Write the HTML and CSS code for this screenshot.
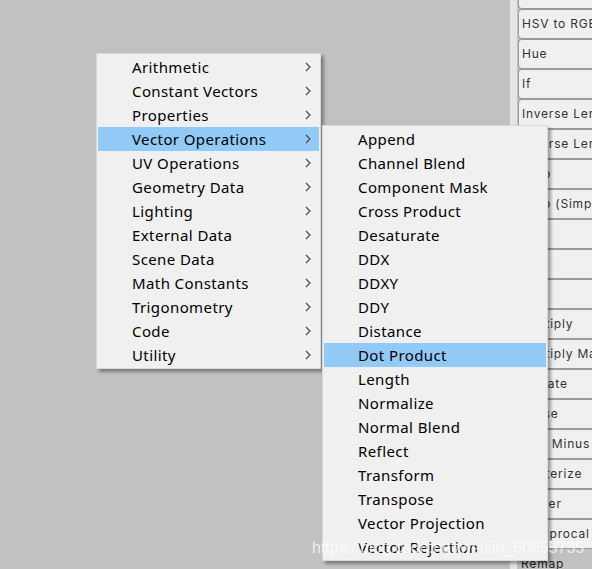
FILE: index.html
```html
<!DOCTYPE html>
<html>
<head>
<meta charset="utf-8">
<link rel="stylesheet" href="styles.css">
</head>
<body>
<div class="stage">
  <div class="canvas">
    <div class="menu main-menu">
      <div class="item"><span class="label">Arithmetic</span><svg class="chev" viewBox="0 0 6 10"><polyline points="1,1 5,5 1,9"/></svg></div>
      <div class="item"><span class="label">Constant Vectors</span><svg class="chev" viewBox="0 0 6 10"><polyline points="1,1 5,5 1,9"/></svg></div>
      <div class="item"><span class="label">Properties</span><svg class="chev" viewBox="0 0 6 10"><polyline points="1,1 5,5 1,9"/></svg></div>
      <div class="item active"><span class="label">Vector Operations</span><svg class="chev" viewBox="0 0 6 10"><polyline points="1,1 5,5 1,9"/></svg></div>
      <div class="item"><span class="label">UV Operations</span><svg class="chev" viewBox="0 0 6 10"><polyline points="1,1 5,5 1,9"/></svg></div>
      <div class="item"><span class="label">Geometry Data</span><svg class="chev" viewBox="0 0 6 10"><polyline points="1,1 5,5 1,9"/></svg></div>
      <div class="item"><span class="label">Lighting</span><svg class="chev" viewBox="0 0 6 10"><polyline points="1,1 5,5 1,9"/></svg></div>
      <div class="item"><span class="label">External Data</span><svg class="chev" viewBox="0 0 6 10"><polyline points="1,1 5,5 1,9"/></svg></div>
      <div class="item"><span class="label">Scene Data</span><svg class="chev" viewBox="0 0 6 10"><polyline points="1,1 5,5 1,9"/></svg></div>
      <div class="item"><span class="label">Math Constants</span><svg class="chev" viewBox="0 0 6 10"><polyline points="1,1 5,5 1,9"/></svg></div>
      <div class="item"><span class="label">Trigonometry</span><svg class="chev" viewBox="0 0 6 10"><polyline points="1,1 5,5 1,9"/></svg></div>
      <div class="item"><span class="label">Code</span><svg class="chev" viewBox="0 0 6 10"><polyline points="1,1 5,5 1,9"/></svg></div>
      <div class="item"><span class="label">Utility</span><svg class="chev" viewBox="0 0 6 10"><polyline points="1,1 5,5 1,9"/></svg></div>
    </div>
    <div class="menu sub-menu">
      <div class="item"><span class="label">Append</span></div>
      <div class="item"><span class="label">Channel Blend</span></div>
      <div class="item"><span class="label">Component Mask</span></div>
      <div class="item"><span class="label">Cross Product</span></div>
      <div class="item"><span class="label">Desaturate</span></div>
      <div class="item"><span class="label">DDX</span></div>
      <div class="item"><span class="label">DDXY</span></div>
      <div class="item"><span class="label">DDY</span></div>
      <div class="item"><span class="label">Distance</span></div>
      <div class="item active"><span class="label">Dot Product</span></div>
      <div class="item"><span class="label">Length</span></div>
      <div class="item"><span class="label">Normalize</span></div>
      <div class="item"><span class="label">Normal Blend</span></div>
      <div class="item"><span class="label">Reflect</span></div>
      <div class="item"><span class="label">Transform</span></div>
      <div class="item"><span class="label">Transpose</span></div>
      <div class="item"><span class="label">Vector Projection</span></div>
      <div class="item"><span class="label">Vector Rejection</span></div>
    </div>
    <div class="watermark">https://blog.csdn.net/weixin_60855735</div>
  </div>
  <div class="panel">
    <div class="strip"></div>
    <div class="nodes">
      <div class="node"></div>
      <div class="node">HSV to RGB</div>
      <div class="node">Hue</div>
      <div class="node">If</div>
      <div class="node">Inverse Lerp</div>
      <div class="node">Inverse Lerp</div>
      <div class="node">Lerp</div>
      <div class="node">Lerp (Simple)</div>
      <div class="node">Log</div>
      <div class="node">Max</div>
      <div class="node">Min</div>
      <div class="node">Multiply</div>
      <div class="node">Multiply Matrix</div>
      <div class="node">Negate</div>
      <div class="node">Noise</div>
      <div class="node">One Minus</div>
      <div class="node">Posterize</div>
      <div class="node">Power</div>
      <div class="node">Reciprocal</div>
      <div class="node remap">Remap</div>
    </div>
    <div class="plus">+</div>
  </div>
</div>
</body>
</html>
```

FILE: styles.css
```css
html, body {
  margin: 0;
  padding: 0;
  width: 592px;
  height: 569px;
  overflow: hidden;
  background: #c1c1c1;
}

.stage {
  display: flex;
  width: 592px;
  height: 569px;
  overflow: hidden;
}

.canvas {
  position: relative;
  width: 510px;
  flex: none;
  height: 569px;
}

.menu {
  position: absolute;
  background: #f0f0f0;
  border: 1px solid #d8d8d8;
  padding: 1px;
  box-shadow: 3px 3px 3px rgba(0, 0, 0, 0.35);
  font-family: "Noto Sans", "Open Sans", sans-serif;
  font-size: 15px;
  letter-spacing: 0.4px;
  color: #000;
  z-index: 2;
}

.main-menu {
  left: 96px;
  top: 53px;
  width: 221px;
}

.sub-menu {
  left: 322px;
  top: 125px;
  width: 222px;
  z-index: 3;
}

.item {
  height: 24px;
  display: flex;
  align-items: center;
  position: relative;
}

.main-menu .item {
  padding-left: 34px;
}

.sub-menu .item {
  padding-left: 34px;
}

.item.active {
  background: #91c9f7;
}

.label {
  flex: 1;
  line-height: 24px;
  white-space: nowrap;
}

.chev {
  width: 6px;
  height: 10px;
  margin-right: 8px;
  fill: none;
  stroke: #444;
  stroke-width: 1.1;
}

.watermark {
  position: absolute;
  left: 312px;
  top: 539px;
  font-family: "Liberation Sans", Arial, sans-serif;
  font-size: 16px;
  color: rgba(255, 255, 255, 0.72);
  white-space: nowrap;
  z-index: 5;
}

.panel {
  position: relative;
  flex: none;
  display: flex;
  width: 82px;
  height: 569px;
  overflow: hidden;
}

.strip {
  width: 7px;
  flex: none;
  background-color: #d0d0d0;
  background-image: radial-gradient(circle, #e6e6e6 0.7px, transparent 0.8px);
  background-size: 2px 2px;
}

.nodes {
  margin-top: -21px;
  margin-left: 1px;
  display: flex;
  flex-direction: column;
  width: 120px;
  flex: none;
}

.node {
  height: 28px;
  flex: none;
  background: #f0f0f0;
  border: 1px solid #9a9a9a;
  border-right: none;
  border-radius: 4px 0 0 4px;
  font-family: "Inter", "DejaVu Sans", sans-serif;
  font-size: 12px;
  letter-spacing: 0.8px;
  color: #333;
  line-height: 28px;
  padding-left: 3px;
  white-space: nowrap;
}

.node.remap {
  background: transparent;
  border: none;
  color: #222;
  line-height: 30px;
}

.plus {
  position: absolute;
  left: 1px;
  top: 554px;
  font-family: "DejaVu Sans", sans-serif;
  font-size: 12px;
  color: #eee;
}
```
